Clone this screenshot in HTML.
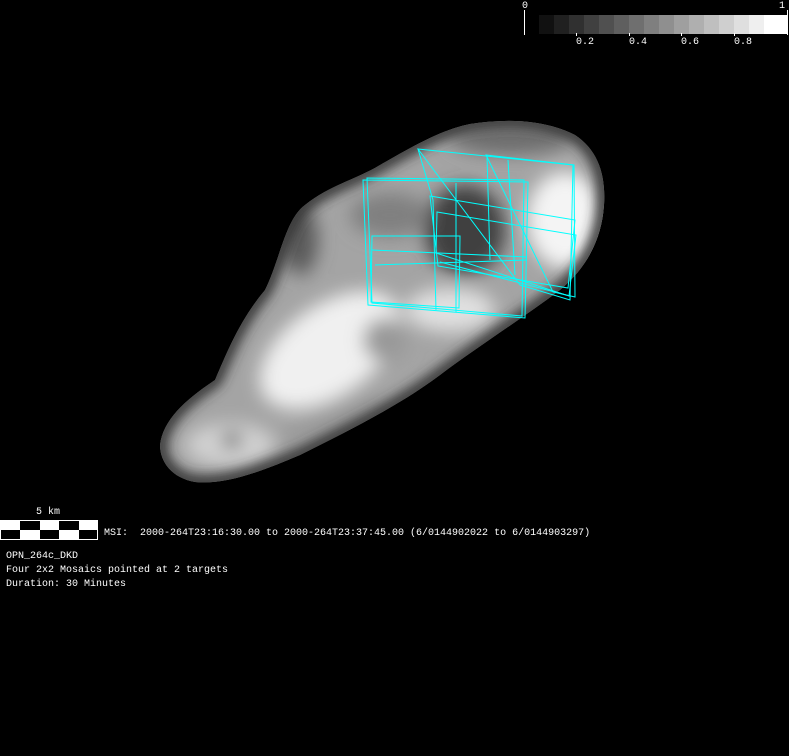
<!DOCTYPE html>
<html><head><style>
body{margin:0;width:789px;height:756px;background:#000;overflow:hidden;position:relative;font-family:"Liberation Mono",monospace;color:#fff}
.t{position:absolute;font-size:10px;line-height:14px;white-space:pre}
</style></head><body>
<svg width="789" height="756" style="position:absolute;left:0;top:0">
<defs>
<filter id="b" x="-20%" y="-20%" width="140%" height="140%"><feGaussianBlur stdDeviation="9"/></filter>
<filter id="e"><feGaussianBlur stdDeviation="6"/></filter>
<clipPath id="c"><path d="M160,445 C163,420 185,400 215,380 C228,350 240,320 265,290 C280,260 285,220 305,205 C330,185 355,180 380,165 C410,148 440,130 470,124 C510,118 545,120 575,135 C598,150 606,175 604,205 C602,235 590,265 560,290 C520,320 480,345 440,375 C400,405 350,430 300,455 C260,472 225,485 195,482 C172,478 160,462 160,445 Z"/></clipPath>
</defs>
<g clip-path="url(#c)">
<rect x="150" y="110" width="470" height="380" fill="#a4a4a4"/>
<g filter="url(#b)">
<ellipse cx="330" cy="350" rx="80" ry="45" fill="#f0f0f0" transform="rotate(-35 330 350)"/>
<ellipse cx="565" cy="220" rx="38" ry="48" fill="#f4f4f4"/>
<ellipse cx="465" cy="230" rx="40" ry="45" fill="#404040"/>
<ellipse cx="390" cy="215" rx="40" ry="22" fill="#808080"/>
<ellipse cx="510" cy="140" rx="60" ry="14" fill="#6a6a6a"/>
<ellipse cx="230" cy="445" rx="45" ry="22" fill="#d0d0d0"/>
<ellipse cx="300" cy="240" rx="18" ry="35" fill="#5a5a5a"/>
<ellipse cx="385" cy="340" rx="22" ry="22" fill="#999"/>
<ellipse cx="450" cy="310" rx="45" ry="22" fill="#e0e0e0"/>
<ellipse cx="232" cy="440" rx="9" ry="7" fill="#303030"/>
<ellipse cx="330" cy="420" rx="60" ry="12" fill="#9a9a9a" transform="rotate(-25 330 420)"/>
</g>
</g>
<g clip-path="url(#c)"><path d="M160,445 C163,420 185,400 215,380 C228,350 240,320 265,290 C280,260 285,220 305,205 C330,185 355,180 380,165 C410,148 440,130 470,124 C510,118 545,120 575,135 C598,150 606,175 604,205 C602,235 590,265 560,290 C520,320 480,345 440,375 C400,405 350,430 300,455 C260,472 225,485 195,482 C172,478 160,462 160,445 Z" fill="none" stroke="#303030" stroke-width="14" filter="url(#e)"/></g>
<g fill="none" stroke="#00ffff" stroke-width="1">
<polygon points="363,180 528,182 525,318 368,305"/>
<polygon points="367,178 524,180 522,316 372,303"/>
<polygon points="418,149 573,165 570,300 520,285"/>
<polygon points="486,155 574,165 575,297 553,292"/>
<polygon points="430,196 575,220 568,288 438,266"/>
<polygon points="437,212 576,235 569,296 436,253"/>
<polygon points="372,236 460,236 459,308 371,302"/>
<line x1="418" y1="149" x2="433" y2="200"/>
<line x1="433" y1="200" x2="436" y2="310"/>
<line x1="456" y1="183" x2="456" y2="312"/>
<line x1="487" y1="155" x2="490" y2="260"/>
<line x1="508" y1="160" x2="515" y2="275"/>
<line x1="372" y1="250" x2="527" y2="257"/>
<line x1="375" y1="265" x2="527" y2="260"/>
<line x1="440" y1="262" x2="570" y2="296"/>
</g>
<g>
<rect x="539" y="15" width="15" height="19" fill="#111"/><rect x="554" y="15" width="15" height="19" fill="#202020"/>
<rect x="569" y="15" width="15" height="19" fill="#303030"/><rect x="584" y="15" width="15" height="19" fill="#404040"/>
<rect x="599" y="15" width="15" height="19" fill="#505050"/><rect x="614" y="15" width="15" height="19" fill="#5f5f5f"/>
<rect x="629" y="15" width="15" height="19" fill="#6f6f6f"/><rect x="644" y="15" width="15" height="19" fill="#7f7f7f"/>
<rect x="659" y="15" width="15" height="19" fill="#8f8f8f"/><rect x="674" y="15" width="15" height="19" fill="#9f9f9f"/>
<rect x="689" y="15" width="15" height="19" fill="#afafaf"/><rect x="704" y="15" width="15" height="19" fill="#bfbfbf"/>
<rect x="719" y="15" width="15" height="19" fill="#cfcfcf"/><rect x="734" y="15" width="15" height="19" fill="#dfdfdf"/>
<rect x="749" y="15" width="15" height="19" fill="#efefef"/><rect x="764" y="15" width="23" height="19" fill="#fff"/>
<line x1="524.5" y1="10" x2="524.5" y2="35" stroke="#fff"/>
<line x1="787.5" y1="10" x2="787.5" y2="35" stroke="#fff"/>
<line x1="576.5" y1="33" x2="576.5" y2="36" stroke="#fff"/>
<line x1="629.5" y1="33" x2="629.5" y2="36" stroke="#fff"/>
<line x1="681.5" y1="33" x2="681.5" y2="36" stroke="#fff"/>
<line x1="734.5" y1="33" x2="734.5" y2="36" stroke="#fff"/>
</g>
<rect x="0" y="520" width="98" height="20" fill="#fff"/>
<rect x="20" y="521" width="20" height="9" fill="#000"/><rect x="59" y="521" width="20" height="9" fill="#000"/>
<rect x="1" y="530" width="19" height="9" fill="#000"/><rect x="40" y="530" width="19" height="9" fill="#000"/><rect x="79" y="530" width="18" height="9" fill="#000"/>
</svg>
<div class="t" style="left:522px;top:0px">0</div>
<div class="t" style="left:779px;top:0px">1</div>
<div class="t" style="left:576px;top:36px">0.2</div>
<div class="t" style="left:629px;top:36px">0.4</div>
<div class="t" style="left:681px;top:36px">0.6</div>
<div class="t" style="left:734px;top:36px">0.8</div>
<div class="t" style="left:36px;top:506px">5 km</div>
<div class="t" style="left:104px;top:527px">MSI:  2000-264T23:16:30.00 to 2000-264T23:37:45.00 (6/0144902022 to 6/0144903297)</div>
<div class="t" style="left:6px;top:550px">OPN_264c_DKD</div>
<div class="t" style="left:6px;top:564px">Four 2x2 Mosaics pointed at 2 targets</div>
<div class="t" style="left:6px;top:578px">Duration: 30 Minutes</div>
</body></html>
